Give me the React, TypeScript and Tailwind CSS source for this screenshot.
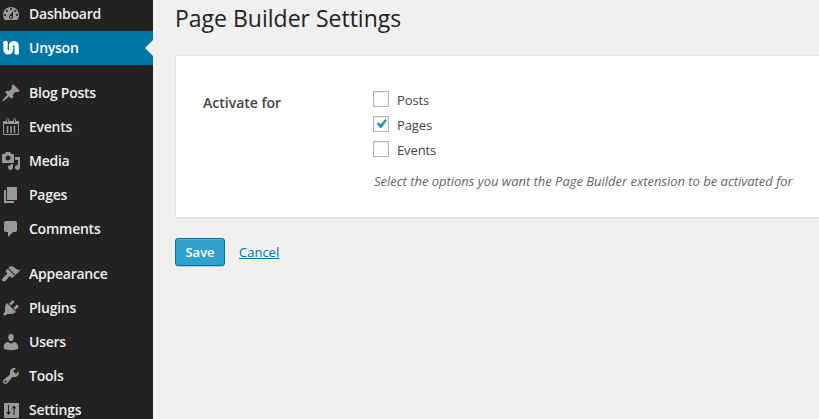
import React from "react";

type Item = { label: string; icon: React.ReactNode; active?: boolean };

const DASHBOARD =
  "M3.76 16h12.48c1.1-1.37 1.76-3.11 1.76-5 0-4.42-3.58-8-8-8s-8 3.58-8 8c0 1.89.66 3.63 1.76 5zM10 4c.55 0 1 .45 1 1s-.45 1-1 1-1-.45-1-1 .45-1 1-1zM6 6c.55 0 1 .45 1 1s-.45 1-1 1-1-.45-1-1 .45-1 1-1zm8 0c.55 0 1 .45 1 1s-.45 1-1 1-1-.45-1-1 .45-1 1-1zm-5.37 5.55L12 7v6c0 1.1-.9 2-2 2s-2-.9-2-2c0-.57.24-1.08.63-1.45zM4 10c.55 0 1 .45 1 1s-.45 1-1 1-1-.45-1-1 .45-1 1-1zm12 0c.55 0 1 .45 1 1s-.45 1-1 1-1-.45-1-1 .45-1 1-1zm-5 3c0-.55-.45-1-1-1s-1 .45-1 1 .45 1 1 1 1-.45 1-1z";
const PIN =
  "M10.44 3.02l1.82-1.82 6.36 6.35-1.83 1.82c-1.05-.68-2.48-.57-3.41.36l-.75.75c-.92.93-1.04 2.35-.35 3.41l-1.83 1.82-2.41-2.41-2.8 2.79c-.42.42-3.38 2.71-3.8 2.29s1.86-3.39 2.28-3.81l2.79-2.79L4.1 9.36l1.83-1.82c1.05.69 2.48.57 3.4-.36l.75-.75c.93-.92 1.05-2.35.36-3.41z";
const MEDIA =
  "M13 11V4c0-.55-.45-1-1-1h-1.67L9 1H5L3.67 3H2c-.55 0-1 .45-1 1v7c0 .55.45 1 1 1h10c.55 0 1-.45 1-1zM7 4.5c1.38 0 2.5 1.12 2.5 2.5S8.38 9.5 7 9.5 4.5 8.38 4.5 7 5.62 4.5 7 4.5zM14 6h5v10.5c0 1.38-1.12 2.5-2.5 2.5S14 17.88 14 16.5s1.12-2.5 2.5-2.5c.17 0 .34.02.5.05V9h-3V6zm-4 8.05V13h2v3.5c0 1.38-1.12 2.5-2.5 2.5S7 17.88 7 16.5 8.12 14 9.5 14c.17 0 .34.02.5.05z";
const PAGES = "M6 15V2h10v13H6zm-1 1h8v2H3V5h2v11z";
const COMMENTS =
  "M5 2h9c1.1 0 2 .9 2 2v7c0 1.1-.9 2-2 2h-2l-5 5v-5H5c-1.1 0-2-.9-2-2V4c0-1.1.9-2 2-2z";
const APPEARANCE =
  "M14.48 11.06L7.41 3.99l1.5-1.5c.5-.56 2.3-.47 3.51.32 1.21.8 1.43 1.28 2.91 2.1 1.18.64 2.45 1.26 4.45.85zm-.71.71L6.7 4.7 4.93 6.47c-.39.39-.39 1.02 0 1.41l1.06 1.06c.39.39.39 1.03 0 1.42-.6.6-1.43 1.11-2.21 1.69-.35.26-.7.53-1.01.84C1.43 14.23.4 16.08 1.4 17.07c.99 1 2.84-.03 4.18-1.36.31-.31.58-.66.85-1.02.57-.78 1.08-1.61 1.69-2.21.39-.39 1.02-.39 1.41 0l1.06 1.06c.39.39 1.02.39 1.41 0z";
const PLUGINS =
  "M13.11 4.36L9.87 7.6 8 5.73l3.24-3.24c.35-.34 1.05-.2 1.56.32.52.51.66 1.21.31 1.55zm-8 1.77l.91-1.12 9.01 9.01-1.19.84c-.71.71-2.63 1.16-3.82 1.16H6.14L4.9 17.26c-.59.59-1.54.59-2.12 0-.59-.58-.59-1.53 0-2.12l1.24-1.24v-3.88c0-1.13.4-3.19 1.09-3.89zm7.26 3.97l3.24-3.24c.34-.35 1.04-.21 1.55.31.52.51.66 1.21.31 1.55l-3.24 3.25z";
const USERS =
  "M10 9.25c-2.27 0-2.73-3.44-2.73-3.44C7 4.02 7.82 2 9.97 2c2.16 0 2.98 2.02 2.71 3.81 0 0-.41 3.44-2.68 3.44zm0 2.57L12.72 10c2.39 0 4.52 2.33 4.52 4.53v2.49s-3.65 1.13-7.24 1.13c-3.65 0-7.24-1.13-7.24-1.13v-2.49c0-2.25 1.94-4.48 4.47-4.48z";
const TOOLS =
  "M16.68 9.77c-1.34 1.34-3.3 1.67-4.95.99l-5.41 6.52c-.99.99-2.59.99-3.58 0s-.99-2.59 0-3.57l6.52-5.42c-.68-1.65-.35-3.61.99-4.95 1.28-1.28 3.12-1.62 4.72-1.06l-2.89 2.89 2.82 2.82 2.86-2.87c.53 1.58.18 3.39-1.08 4.65zM3.81 16.21c.4.39 1.04.39 1.43 0 .4-.4.4-1.04 0-1.43-.39-.4-1.03-.4-1.43 0-.39.39-.39 1.03 0 1.43z";
const SETTINGS =
  "M17 3H4c-.55 0-1 .45-1 1v13c0 .55.45 1 1 1h13c.55 0 1-.45 1-1V4c0-.55-.45-1-1-1zM7 5h1v7h2l-2.5 3L5 12h2zM13 5.5l2.5 3h-2V15h-1V8.5h-2z";

function Glyph({ d }: { d: string }) {
  return (
    <svg viewBox="0 0 20 20" className="size-5 shrink-0" fill="currentColor" fillRule="evenodd">
      <path d={d} />
    </svg>
  );
}

function UnysonLogo() {
  return (
    <svg viewBox="0 0 20 20" className="size-5 shrink-0" fill="none" stroke="#fff" strokeWidth="4.2">
      <path d="M4.5 3.8V11.700a2.800 2.800 0 0 0 5.600 0V7.800a2.800 2.800 0 0 1 5.600 0V15.800" />
      <path d="M4.500 5v-.200M15.700 14.600v.200" strokeLinecap="round" />
    </svg>
  );
}

function CalendarIcon() {
  return (
    <svg viewBox="0 0 20 20" className="size-5 shrink-0" fill="none" stroke="currentColor">
      <path d="M2.5 4v13.5h15V4" />
      <path d="M2 5.500h16" strokeWidth="3" />
      <path d="M6.500 9v7M10 9v7M13.500 9v7" strokeWidth="1.500" />
      <rect x="5.500" y="1.500" width="2" height="4" rx="1" fill="#222" />
      <rect x="12.500" y="1.500" width="2" height="4" rx="1" fill="#222" />
    </svg>
  );
}

const groups: Item[][] = [
  [
    { label: "Dashboard", icon: <Glyph d={DASHBOARD} /> },
    { label: "Unyson", icon: <UnysonLogo />, active: true },
  ],
  [
    { label: "Blog Posts", icon: <Glyph d={PIN} /> },
    { label: "Events", icon: <CalendarIcon /> },
    { label: "Media", icon: <Glyph d={MEDIA} /> },
    { label: "Pages", icon: <Glyph d={PAGES} /> },
    { label: "Comments", icon: <Glyph d={COMMENTS} /> },
  ],
  [
    { label: "Appearance", icon: <Glyph d={APPEARANCE} /> },
    { label: "Plugins", icon: <Glyph d={PLUGINS} /> },
    { label: "Users", icon: <Glyph d={USERS} /> },
    { label: "Tools", icon: <Glyph d={TOOLS} /> },
    { label: "Settings", icon: <Glyph d={SETTINGS} /> },
  ],
];

function MenuItem({ label, icon, active }: Item) {
  return (
    <li
      className={
        active
          ? "relative flex h-[34px] items-center gap-2 bg-[#0074a2] pl-px text-white"
          : "flex h-[34px] items-center gap-2 pl-px text-[#999]"
      }
    >
      {icon}
      <span className={active ? "text-white" : "text-[#eee]"}>{label}</span>
      {active && (
        <span className="absolute top-1/2 right-0 -translate-y-1/2 border-y-8 border-r-8 border-y-transparent border-r-[#f0f0f0]" />
      )}
    </li>
  );
}

function Option({ label, checked }: { label: string; checked?: boolean }) {
  return (
    <label className="flex h-[25px] items-center gap-2 text-[13px]">
      <span className="mb-px flex size-4 items-center justify-center border border-[#b4b4b4] bg-white shadow-[inset_0_1px_2px_rgba(0,0,0,0.07)]">
        {checked && (
          <svg viewBox="0 0 20 20" className="-ml-px size-[18px] shrink-0" fill="#1e8cbe">
            <path d="M14.83 4.89l1.34.94-5.81 8.38H9.02L5.78 9.67l1.34-1.25 2.57 2.4z" stroke="#1e8cbe" strokeWidth="0.8" />
          </svg>
        )}
      </span>
      <span className="pt-0.5 tracking-[-0.1px]">{label}</span>
    </label>
  );
}

export default function App() {
  return (
    <div className="flex h-[419px] w-[819px] overflow-hidden bg-[#f0f0f0] font-['Open_Sans',sans-serif] text-[#444]">
      <nav className="-mt-[3px] flex h-[422px] w-[153px] shrink-0 flex-col gap-[11px] overflow-hidden bg-[#222] text-sm font-semibold tracking-[-0.25px]">
        {groups.map((g, i) => (
          <ul key={i} className="shrink-0">
            {g.map((item) => (
              <MenuItem key={item.label} {...item} />
            ))}
          </ul>
        ))}
      </nav>
      <main className="flex min-w-0 flex-1 flex-col pl-[22px]">
        <h1 className="pt-1 text-[23px] leading-[29px] text-[#222]">Page Builder Settings</h1>
        <section className="mt-[22px] flex h-[163px] border border-r-0 border-[#e5e5e5] bg-white pl-[27px] shadow-[0_1px_1px_rgba(0,0,0,0.04)]">
          <h2 className="w-[170px] shrink-0 pt-[37px] text-sm leading-5 font-semibold">Activate for</h2>
          <div className="pt-[31px]">
            <Option label="Posts" />
            <Option label="Pages" checked />
            <Option label="Events" />
            <p className="mt-[9px] pl-px text-[13px] leading-5 tracking-[-0.02px] whitespace-nowrap text-[#666] italic">
              Select the options you want the Page Builder extension to be activated for
            </p>
          </div>
        </section>
        <div className="mt-5 flex items-center gap-[14px] text-[13px]">
          <button className="h-7 w-[50px] rounded-[3px] border border-[#0074a2] bg-[#2ea2cc] pt-px font-semibold text-white shadow-[inset_0_1px_0_rgba(120,200,230,0.5),0_1px_0_rgba(0,0,0,0.15)]">
            Save
          </button>
          <a className="pt-px text-[#0074a2] underline">Cancel</a>
        </div>
      </main>
    </div>
  );
}
